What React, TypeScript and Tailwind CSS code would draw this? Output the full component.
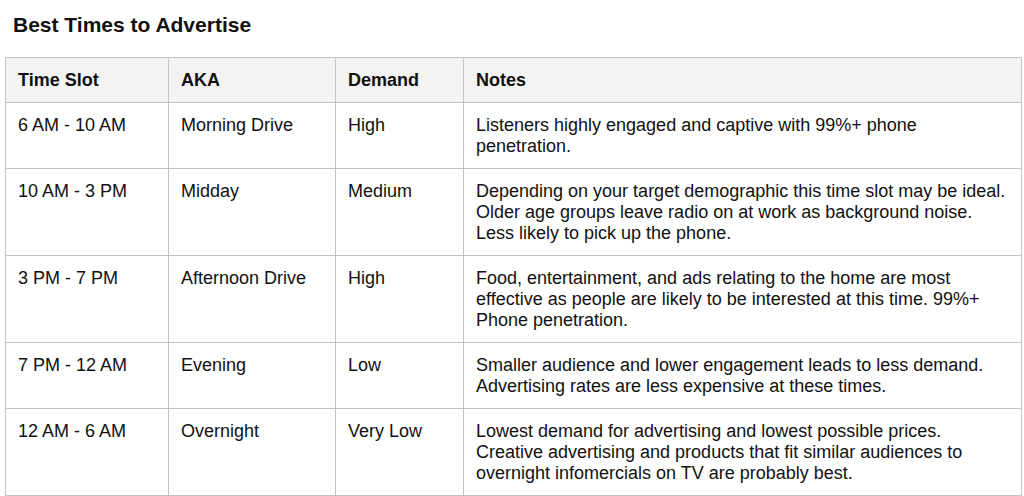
const rows = [
  {
    slot: "6 AM - 10 AM",
    aka: "Morning Drive",
    demand: "High",
    notes: ["Listeners highly engaged and captive with 99%+ phone", "penetration."],
  },
  {
    slot: "10 AM - 3 PM",
    aka: "Midday",
    demand: "Medium",
    notes: [
      "Depending on your target demographic this time slot may be ideal.",
      "Older age groups leave radio on at work as background noise.",
      "Less likely to pick up the phone.",
    ],
  },
  {
    slot: "3 PM - 7 PM",
    aka: "Afternoon Drive",
    demand: "High",
    notes: [
      "Food, entertainment, and ads relating to the home are most",
      "effective as people are likely to be interested at this time. 99%+",
      "Phone penetration.",
    ],
  },
  {
    slot: "7 PM - 12 AM",
    aka: "Evening",
    demand: "Low",
    notes: [
      "Smaller audience and lower engagement leads to less demand.",
      "Advertising rates are less expensive at these times.",
    ],
  },
  {
    slot: "12 AM - 6 AM",
    aka: "Overnight",
    demand: "Very Low",
    notes: [
      "Lowest demand for advertising and lowest possible prices.",
      "Creative advertising and products that fit similar audiences to",
      "overnight infomercials on TV are probably best.",
    ],
  },
];

const cell = "border border-[#c4c4c4] px-3 pt-3 pb-[11px] align-top";

export default function App() {
  return (
    <div className="w-[1024px] h-[496px] bg-white text-[#111] font-['Liberation_Sans',Arial,sans-serif] overflow-hidden">
      <h1 className="pl-[13px] pt-[13px] text-[21px] leading-[24px] font-bold">Best Times to Advertise</h1>
      <table className="ml-[5px] mt-[20px] w-[1017px] border-collapse table-fixed text-[18px] leading-[21px]">
        <colgroup>
          <col className="w-[163px]" />
          <col className="w-[167px]" />
          <col className="w-[128px]" />
          <col />
        </colgroup>
        <thead>
          <tr className="bg-[#f3f3f3] text-left">
            <th className={`${cell} h-[44px] align-middle py-0 font-bold`}>Time Slot</th>
            <th className={`${cell} h-[44px] align-middle py-0 font-bold`}>AKA</th>
            <th className={`${cell} h-[44px] align-middle py-0 font-bold`}>Demand</th>
            <th className={`${cell} h-[44px] align-middle py-0 font-bold`}>Notes</th>
          </tr>
        </thead>
        <tbody>
          {rows.map((r) => (
            <tr key={r.slot}>
              <td className={cell}>{r.slot}</td>
              <td className={cell}>{r.aka}</td>
              <td className={cell}>{r.demand}</td>
              <td className={cell}>
                {r.notes.map((n) => (
                  <div key={n}>{n}</div>
                ))}
              </td>
            </tr>
          ))}
        </tbody>
      </table>
    </div>
  );
}
